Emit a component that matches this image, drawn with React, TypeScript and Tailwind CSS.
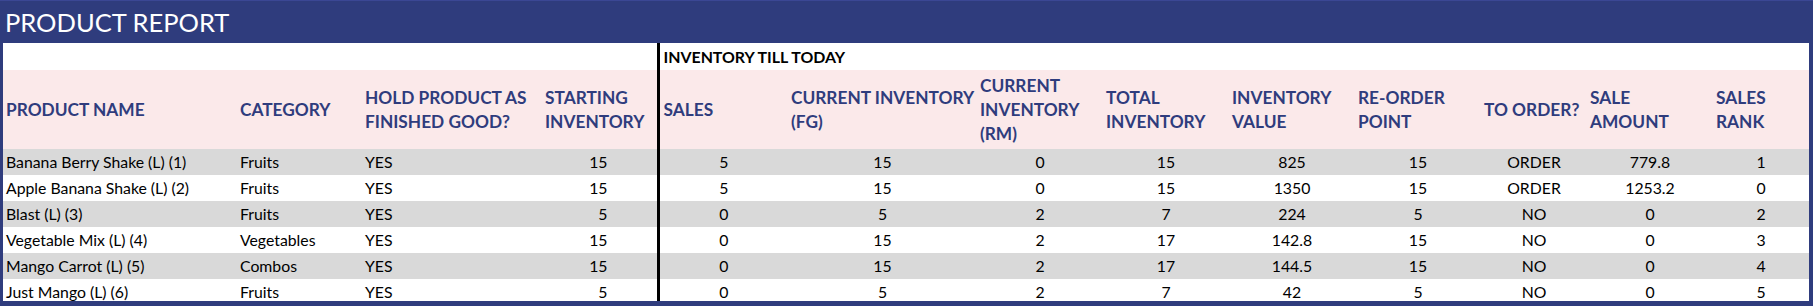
const navy = "bg-[#2f3c7d]";

const colWidths = [
  "w-[234px]",
  "w-[125px]",
  "w-[180px]",
  "w-[116px]",
  "w-[130px]",
  "w-[189px]",
  "w-[126px]",
  "w-[126px]",
  "w-[126px]",
  "w-[126px]",
  "w-[106px]",
  "w-[126px]",
  "w-[96px]",
];

const headers: string[][] = [
  ["PRODUCT NAME"],
  ["CATEGORY"],
  ["HOLD PRODUCT AS", "FINISHED GOOD?"],
  ["STARTING", "INVENTORY"],
  ["SALES"],
  ["CURRENT INVENTORY", "(FG)"],
  ["CURRENT", "INVENTORY", "(RM)"],
  ["TOTAL", "INVENTORY"],
  ["INVENTORY", "VALUE"],
  ["RE-ORDER", "POINT"],
  ["TO ORDER?"],
  ["SALE", "AMOUNT"],
  ["SALES", "RANK"],
];

type Row = [string, string, string, ...(string | number)[]];

const rows: Row[] = [
  ["Banana Berry Shake (L) (1)", "Fruits", "YES", 15, 5, 15, 0, 15, 825, 15, "ORDER", 779.8, 1],
  ["Apple Banana Shake (L) (2)", "Fruits", "YES", 15, 5, 15, 0, 15, 1350, 15, "ORDER", 1253.2, 0],
  ["Blast (L) (3)", "Fruits", "YES", 5, 0, 5, 2, 7, 224, 5, "NO", 0, 2],
  ["Vegetable Mix (L) (4)", "Vegetables", "YES", 15, 0, 15, 2, 17, 142.8, 15, "NO", 0, 3],
  ["Mango Carrot (L) (5)", "Combos", "YES", 15, 0, 15, 2, 17, 144.5, 15, "NO", 0, 4],
  ["Just Mango (L) (6)", "Fruits", "YES", 5, 0, 5, 2, 7, 42, 5, "NO", 0, 5],
];

function cellAlign(i: number) {
  if (i < 3) return "text-left pl-[3px]";
  if (i === 3) return "text-right pr-[49px]";
  return "text-center";
}

export default function App() {
  return (
    <div className="w-[1813px] h-[306px] overflow-hidden bg-white [font-family:Lato,sans-serif]">
      {/* title bar */}
      <div className={`${navy} h-[43px] border-t border-[#3b4794] pl-[5px] text-white text-[25.5px] leading-[42px]`}>
        PRODUCT REPORT
      </div>

      <div className="h-[263px] overflow-hidden border-l-[3px] border-r-[4px] border-b-[5px] border-[#2f3c7d]">
        <table className="table-fixed border-collapse w-[1806px]">
          <colgroup>
            {colWidths.map((w, i) => (
              <col key={i} className={w} />
            ))}
          </colgroup>
          <tbody>
            <tr className="h-[27px] bg-white">
              <td colSpan={4}></td>
              <td
                colSpan={9}
                className="border-l-[3px] border-black pl-[4px] text-[15.9px] leading-[27px] font-bold text-black whitespace-nowrap"
              >
                INVENTORY TILL TODAY
              </td>
            </tr>
            <tr className="h-[79px] bg-[#fbe9ea]">
              {headers.map((lines, i) => (
                <td
                  key={i}
                  className={`align-middle text-left font-bold text-[17.3px] leading-[24px] text-[#2f3c7d] whitespace-nowrap ${
                    i === 4 ? "border-l-[3px] border-black pl-[4px]" : "pl-[3px]"
                  }`}
                >
                  {lines.map((l, j) => (
                    <div key={j}>{l}</div>
                  ))}
                </td>
              ))}
            </tr>
            {rows.map((r, ri) => (
              <tr key={ri} className={`h-[26px] ${ri % 2 === 0 ? "bg-[#d9d9d9]" : "bg-white"}`}>
                {r.map((v, ci) => (
                  <td
                    key={ci}
                    className={`text-[15.8px] leading-[26px] text-black whitespace-nowrap ${cellAlign(ci)} ${
                      ci === 4 ? "border-l-[3px] border-black" : ""
                    }`}
                  >
                    {v}
                  </td>
                ))}
              </tr>
            ))}
          </tbody>
        </table>
      </div>
    </div>
  );
}
